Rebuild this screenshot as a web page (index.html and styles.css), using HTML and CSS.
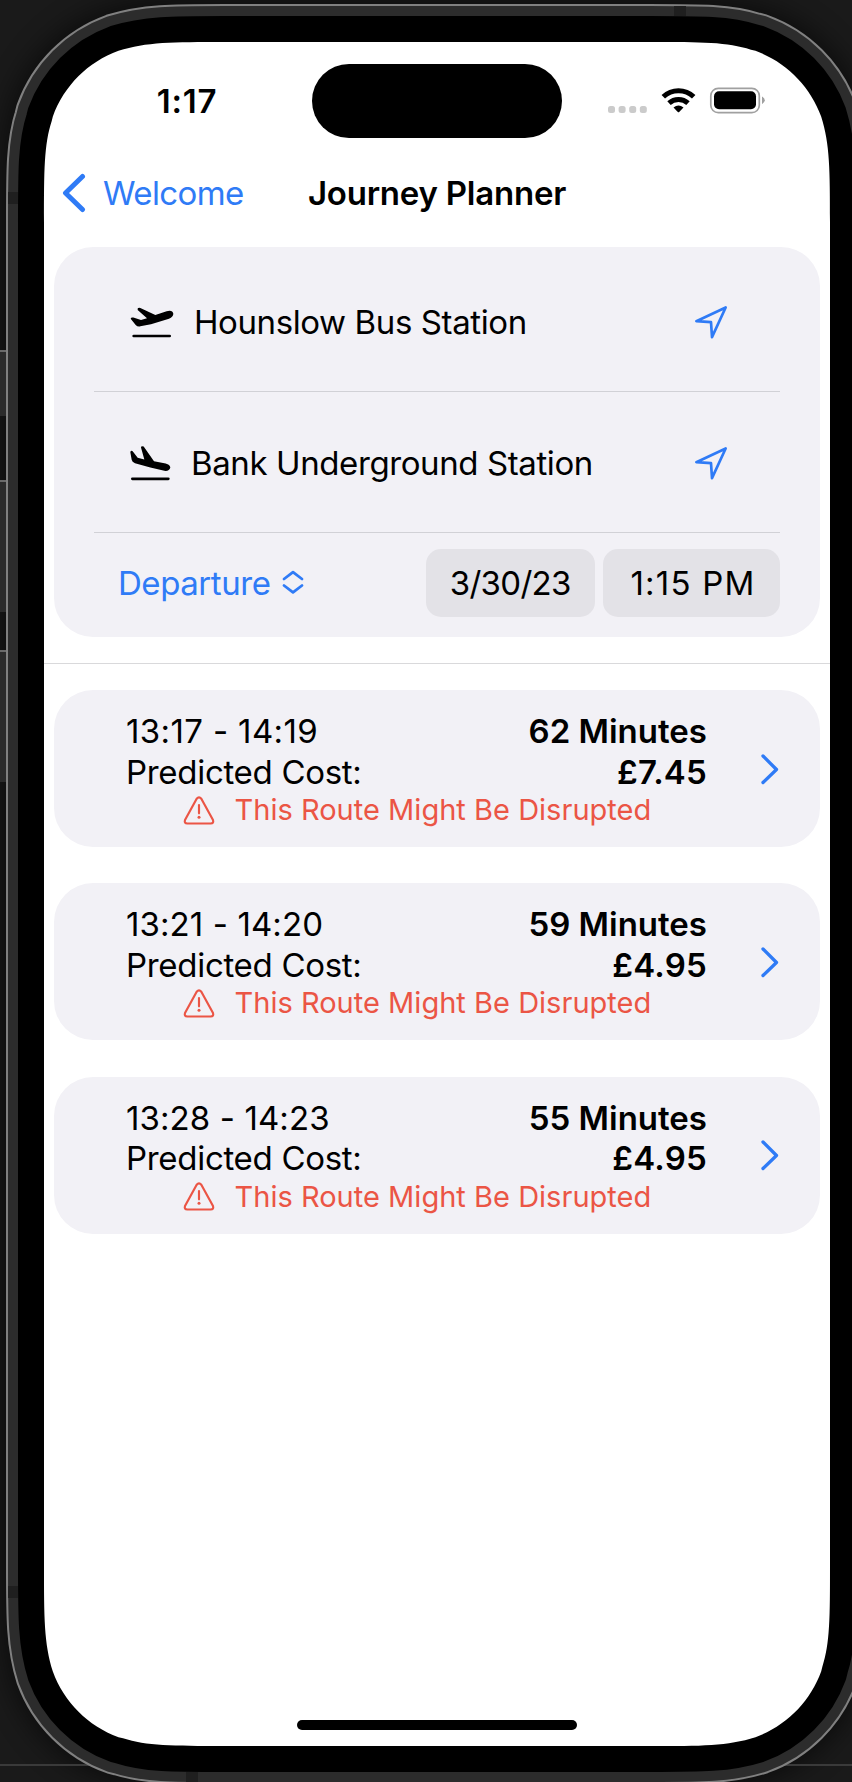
FILE: index.html
```html
<!DOCTYPE html>
<html lang="en">
<head>
<meta charset="utf-8">
<title>Journey Planner</title>
<link rel="stylesheet" href="styles.css">
</head>
<body>
<svg class="device" viewBox="0 0 852 1782" width="852" height="1782" aria-hidden="true">
  <defs>
    <path id="screen" d="M224.38 42H649.62c51.94 0 77.91 0 101.33 7.72l4.54 1.12c30.52 11.11 54.56 35.15 65.67 65.67c8.84 27.96 8.84 53.93 8.84 105.87V1565.62c0 51.94 0 77.91-7.72 101.33l-1.12 4.54c-11.11 30.52-35.15 54.56-65.67 65.67c-27.96 8.84-53.93 8.84-105.87 8.84H224.38c-51.94 0-77.91 0-101.33-7.72l-4.54-1.12c-30.52-11.11-54.56-35.15-65.67-65.67c-8.84-27.96-8.84-53.93-8.84-105.87V222.38c0-51.94 0-77.91 7.72-101.33l1.12-4.54c11.11-30.52 35.15-54.56 65.67-65.67c27.96-8.84 53.93-8.84 105.87-8.84Z"/>
    <filter id="soft" x="-10%" y="-10%" width="120%" height="120%"><feGaussianBlur stdDeviation="14"/></filter>
  </defs>
  <rect width="852" height="1782" fill="#1a1a1a"/>
  <use href="#screen" stroke="#000" stroke-width="84" opacity=".55" filter="url(#soft)"/>
  <path d="M0 1765H852" stroke="#3a3a3a" stroke-width="2"/>
  <g>
    <path d="M0 350h6v66H0zM0 480h6v132H0zM0 650h6v132H0z" fill="#2b2b2b"/>
    <path d="M0 351h6M0 481h6M0 651h6" stroke="#6a6a6a" stroke-width="2"/>
  </g>
  <use href="#screen" stroke="#808080" stroke-width="76"/>
  <use href="#screen" stroke="#2c2c2c" stroke-width="72"/>
  <path d="M8 192h10v12H8zM8 1586h10v12H8zM674 6h12v10h-12zM186 1772h12v10h-12z" fill="#1f1f1f"/>
  <use href="#screen" stroke="#000" stroke-width="52"/>
  <use href="#screen" fill="#fff"/>
</svg>
<svg class="sprite" aria-hidden="true">
  <symbol id="i-arrow" viewBox="790 200 96 98"><path d="M794 245L882 204L841 293L838 248Z" fill="none" stroke="#2f7bf6" stroke-width="8" stroke-linejoin="round"/></symbol>
  <symbol id="i-warn" viewBox="549 795 94 87"><path d="M589 803Q596 795 603 803L638 867Q641 877 631 877.500H561Q551 877 554 867Z" fill="none" stroke="#eb5545" stroke-width="6.500" stroke-linejoin="round"/><path d="M596 822V847" stroke="#eb5545" stroke-width="6.500" stroke-linecap="round"/><circle cx="596" cy="859" r="4.500" fill="#eb5545"/></symbol>
  <symbol id="i-next" viewBox="0 0 18 31"><path d="M2 2L15.500 15.500L2 28.500" fill="none" stroke="#2f7bf6" stroke-width="3.300" stroke-linecap="round" stroke-linejoin="round"/></symbol>
</svg>

<main class="screen">
  <header class="status">
    <span class="clock">1:17</span>
    <span class="island"></span>
    <svg class="status-icons" viewBox="607 86 160 28" width="160" height="28">
      <g fill="#cbcbcb"><rect x="608" y="106" width="7" height="7" rx="2.500"/><rect x="618.600" y="106" width="7" height="7" rx="2.500"/><rect x="629.200" y="106" width="7" height="7" rx="2.500"/><rect x="639.800" y="106" width="7" height="7" rx="2.500"/></g>
      <g fill="none" stroke="#000" stroke-width="5">
        <path d="M663.300 96.800A22 22 0 0 1 693.700 96.800"/>
        <path d="M669 103.100A14 14 0 0 1 688 103.100"/>
      </g>
      <path d="M673.500 107.500Q678.500 103.500 683.500 107.500L679.200 112Q678.500 112.700 677.800 112Z"/>
      <rect x="710.800" y="88.300" width="48.500" height="24.400" rx="7.500" fill="none" stroke="#a0a0a0" stroke-width="1.700"/>
      <rect x="714" y="91.300" width="42" height="18" rx="5"/>
      <path d="M762 96.500Q764.800 98 764.800 100.300T762 104Z" fill="#a0a0a0"/>
    </svg>
  </header>

  <nav class="nav">
    <a class="back"><svg width="24" height="40" viewBox="0 0 24 40"><path d="M20.500 3.500L3.500 20L20.500 36.500" fill="none" stroke="#2f7bf6" stroke-width="5" stroke-linecap="round" stroke-linejoin="round"/></svg><span>Welcome</span></a>
    <h1 class="title">Journey Planner</h1>
  </nav>

  <section class="card search">
    <div class="place from">
      <svg class="plane" viewBox="269 197 132 93" width="44" height="31"><path d="M271 232Q272 227 279 228.500L302 236L320 231L292 206Q290 198 300 200L345 221L379 209.500Q397 205 399 217Q399 226 386 232L332 249L300 255Q292 257 286 251Z"/><path d="M280 284H388" stroke="#000" stroke-width="8" stroke-linecap="round"/></svg>
      <span class="name">Hounslow Bus Station</span>
      <svg class="locate" width="32" height="33"><use href="#i-arrow"/></svg>
    </div>
    <div class="place to">
      <svg class="plane" viewBox="269 613 123 107" width="41" height="36"><path d="M270 634Q271 628 277 631L292 651L312 656L302 620Q302 614 310 617L341 661L376 668Q389 671 390 680Q387 692 372 690L330 680L284 667Q275 664 274 657Z"/><path d="M276 714H384" stroke="#000" stroke-width="8" stroke-linecap="round"/></svg>
      <span class="name">Bank Underground Station</span>
      <svg class="locate" width="32" height="33"><use href="#i-arrow"/></svg>
    </div>
    <div class="when">
      <span class="mode">Departure</span>
      <svg class="updown" width="22" height="25" viewBox="0 0 22 25"><path d="M2 9L11 2.200L20 9M2 15.500L11 22.300L20 15.500" fill="none" stroke="#2f7bf6" stroke-width="2.800" stroke-linecap="round" stroke-linejoin="round"/></svg>
      <span class="pill date">3/30/23</span>
      <span class="pill time">1:15 PM</span>
    </div>
  </section>

  <section class="routes">
    <article class="card route">
      <div class="info">
        <div class="line"><span class="span wide">13:17 - 14:19</span><b class="mins">62 Minutes</b></div>
        <div class="line"><span class="label">Predicted Cost:</span><b class="cost">£7.45</b></div>
        <div class="warning"><svg width="32" height="29"><use href="#i-warn"/></svg><span>This Route Might Be Disrupted</span></div>
      </div>
      <svg class="next" width="18" height="31"><use href="#i-next"/></svg>
    </article>
    <article class="card route">
      <div class="info">
        <div class="line"><span class="span">13:21 - 14:20</span><b class="mins">59 Minutes</b></div>
        <div class="line"><span class="label">Predicted Cost:</span><b class="cost">£4.95</b></div>
        <div class="warning"><svg width="32" height="29"><use href="#i-warn"/></svg><span>This Route Might Be Disrupted</span></div>
      </div>
      <svg class="next" width="18" height="31"><use href="#i-next"/></svg>
    </article>
    <article class="card route">
      <div class="info">
        <div class="line"><span class="span">13:28 - 14:23</span><b class="mins">55 Minutes</b></div>
        <div class="line"><span class="label">Predicted Cost:</span><b class="cost">£4.95</b></div>
        <div class="warning"><svg width="32" height="29"><use href="#i-warn"/></svg><span>This Route Might Be Disrupted</span></div>
      </div>
      <svg class="next" width="18" height="31"><use href="#i-next"/></svg>
    </article>
  </section>
  <div class="home"></div>
</main>
</body>
</html>
```
FILE: styles.css
```css
* { box-sizing: border-box; }
body {
  margin: 0;
  width: 852px;
  height: 1782px;
  overflow: hidden;
  position: relative;
  padding: 42px 22px 36px 44px;
  background: #1a1a1a;
  color: #000;
  font: 400 33px/40px Inter, "Liberation Sans", sans-serif;
  white-space: nowrap;
}
svg { display: block; flex: none; }
.device { position: absolute; left: 0; top: 0; fill: none; }
.sprite { position: absolute; width: 0; height: 0; }
.screen {
  position: relative;
  height: 1704px;
  display: flex;
  flex-direction: column;
}
.status {
  display: grid;
  grid-template-columns: 268px 250px 268px;
  align-items: center;
  height: 96px;
  padding-top: 22px;
}
.clock { padding-left: 18px; text-align: center; font-weight: 600; letter-spacing: 0.8px; }
.island { height: 74px; border-radius: 37px; background: #000; }
.status-icons { margin-left: 45px; margin-top: -2px; }
.nav {
  display: grid;
  grid-template-columns: 1fr auto 1fr;
  align-items: center;
  height: 109px;
  padding-left: 18px;
  padding-right: 18px;
}
.back { display: flex; align-items: center; gap: 17px; color: #2f7bf6; letter-spacing: -0.6px; }
.title { margin: 0; font-size: 33px; font-weight: 600; letter-spacing: -0.22px; }
.card { margin: 0 10px; border-radius: 39px; background: #f2f1f6; }
.search { height: 390px; padding: 0 40px; }
.place {
  display: flex;
  align-items: center;
  border-bottom: 1px solid #d1d1d6;
  padding: 0 53px 0 36px;
}
.from { height: 145px; padding-top: 6px; }
.to { height: 141px; padding-top: 2px; }
.name { flex: 1; padding-left: 20px; letter-spacing: -0.4px; }
.when { display: flex; align-items: center; height: 100px; padding-left: 24px; }
.mode { color: #2f7bf6; letter-spacing: -0.45px; }
.updown { margin-left: 12px; margin-right: auto; margin-top: -2px; }
.pill {
  display: flex;
  align-items: center;
  justify-content: center;
  height: 68px;
  border-radius: 15px;
  background: #e3e2e7;
}
.date { width: 168.5px; letter-spacing: -0.7px; }
.time { width: 177px; margin-left: 8.5px; padding-left: 3px; letter-spacing: 1.2px; }
.routes {
  margin-top: 26px;
  padding-top: 26px;
  border-top: 1px solid #d9d9db;
  display: flex;
  flex-direction: column;
  gap: 36.3px;
}
.route { display: flex; align-items: center; justify-content: space-between; height: 157px; padding: 2px 41px 0 72px; }
.info { width: 581px; }
.line { display: flex; justify-content: space-between; height: 40.5px; line-height: 40.5px; }
.line b { font-weight: 600; }
.span { letter-spacing: 0.1px; }
.span.wide { letter-spacing: 0.37px; }
.label { letter-spacing: -0.3px; }
.line .cost { letter-spacing: 0.2px; }
.warning { display: flex; align-items: center; gap: 20px; height: 36px; padding-left: 56.5px; color: #eb5545; font-size: 29px; letter-spacing: 0.02px; }
.next { margin-bottom: 1px; }
.home { width: 280px; height: 10px; border-radius: 5px; background: #000; margin: auto auto 16px 253px; }
```
